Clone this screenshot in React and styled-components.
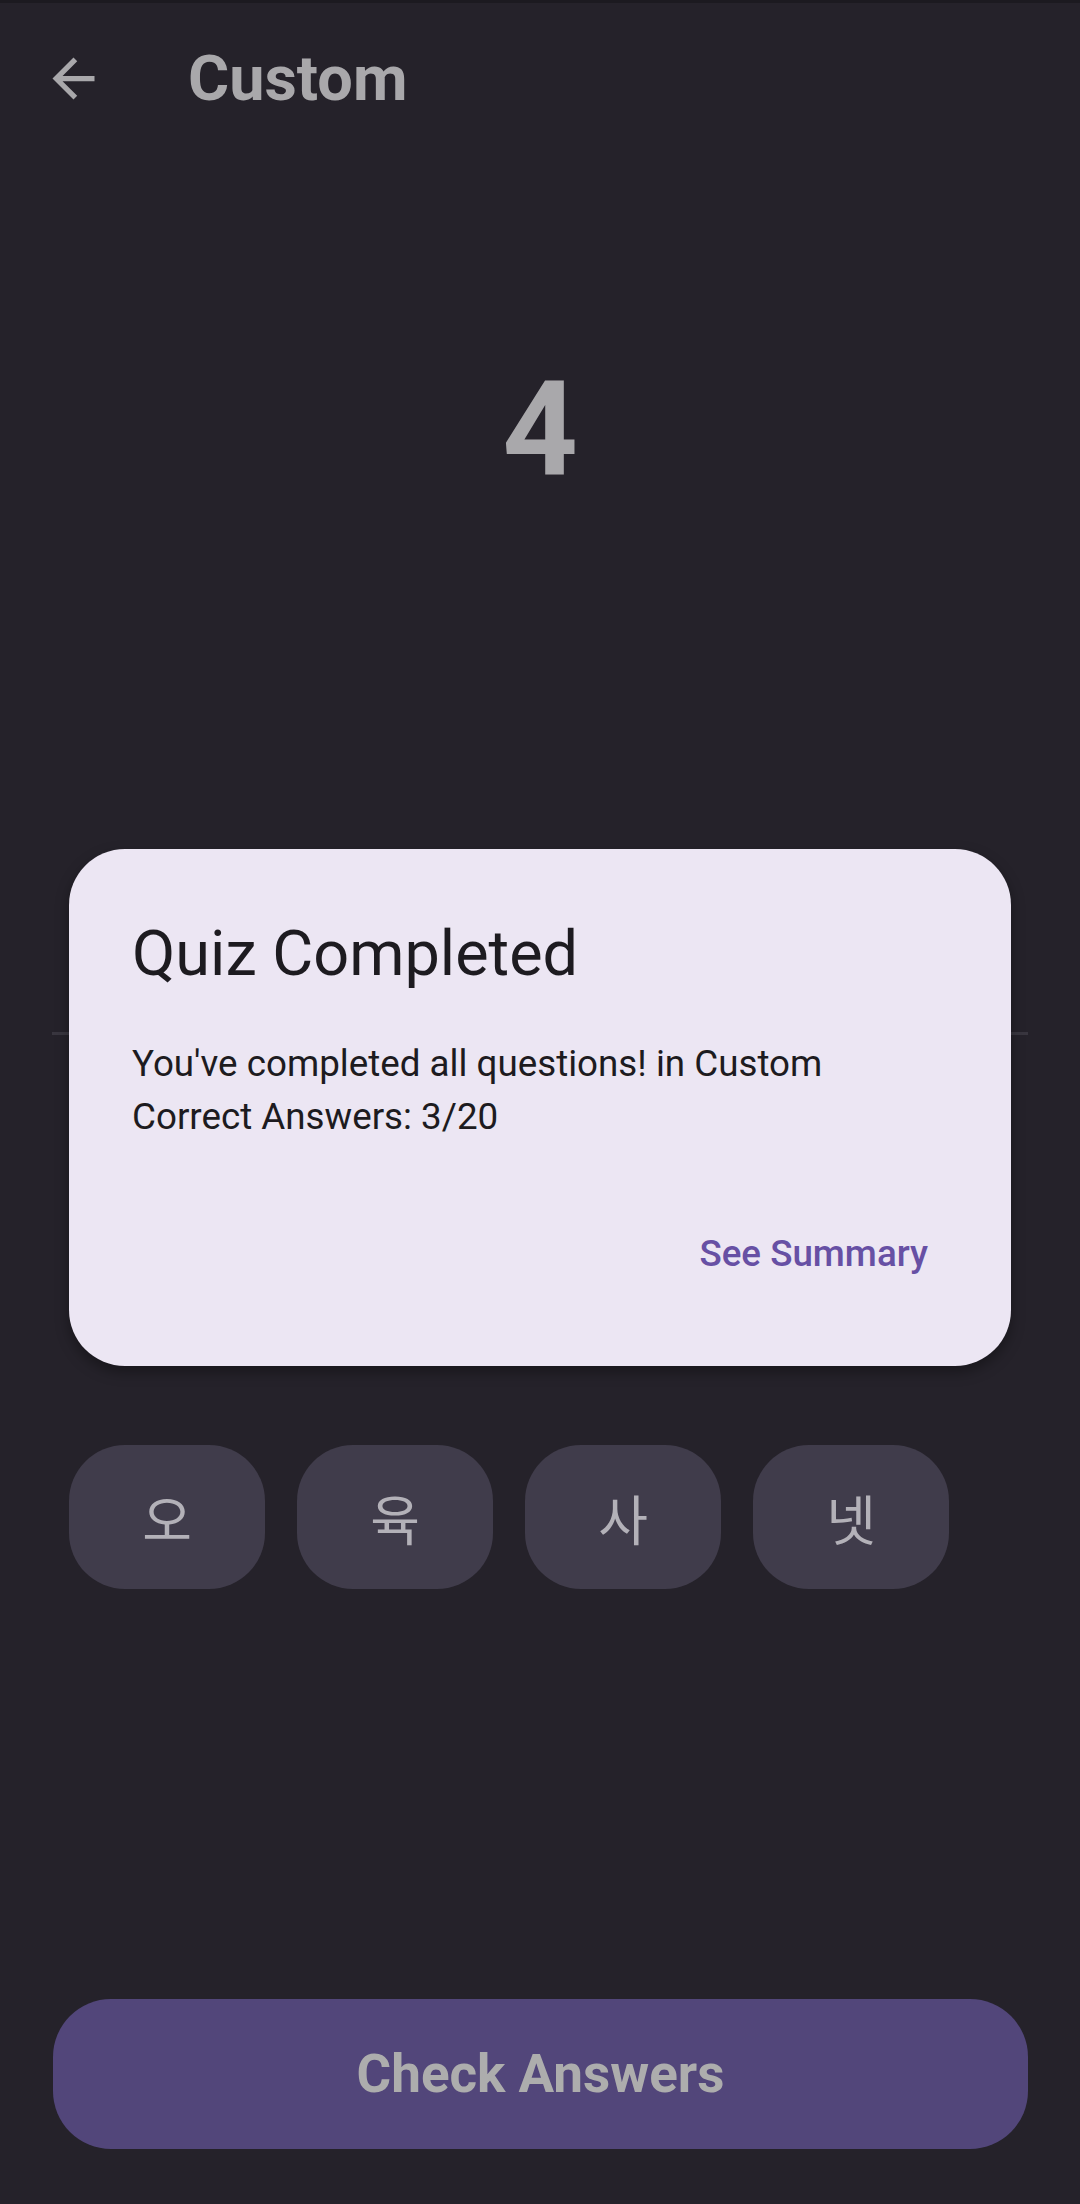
import styled, { createGlobalStyle } from 'styled-components'

const GlobalStyle = createGlobalStyle`
  html, body {
    margin: 0;
    padding: 0;
    background: #25222a;
  }
  * {
    box-sizing: border-box;
  }
`

const Screen = styled.div`
  position: relative;
  display: flex;
  flex-direction: column;
  width: 1080px;
  height: 2204px;
  background: #25222a;
  font-family: Roboto, "Noto Sans", sans-serif;
  overflow: hidden;
`

const StatusStrip = styled.div`
  height: 3px;
  background: #1c1a20;
`

const TopBar = styled.header`
  display: flex;
  align-items: center;
  height: 150px;
  padding-left: 42px;
`

const BackButton = styled.div`
  display: flex;
  width: 63px;
  height: 63px;
  color: #a9a8ab;
`

const Title = styled.h1`
  margin: 0 0 0 83px;
  font-size: 63px;
  line-height: 1;
  font-weight: 700;
  color: #a9a8ab;
`

const Prompt = styled.div`
  margin-top: 210px;
  text-align: center;
  font-size: 132px;
  line-height: 1;
  font-weight: 700;
  color: #a9a8ab;
`

const Divider = styled.div`
  margin: 537px 52px 0;
  height: 3px;
  background: #39363f;
`

const ChipRow = styled.div`
  display: flex;
  gap: 32px;
  margin-top: 410px;
  padding-left: 69px;
`

const Chip = styled.div`
  display: flex;
  align-items: center;
  justify-content: center;
  width: 196px;
  height: 144px;
  border-radius: 56px;
  background: #403c4b;
  color: #b3b1b8;
  font-family: "Noto Sans CJK KR", sans-serif;
  font-size: 54px;
  font-weight: 400;
`

const CheckButton = styled.div`
  display: flex;
  align-items: center;
  justify-content: center;
  margin: auto 52px 55px 53px;
  height: 150px;
  border-radius: 58px;
  background: #52467a;
  color: #adadad;
  font-size: 53px;
  font-weight: 700;
`

const Overlay = styled.div`
  position: absolute;
  inset: 0;
  display: flex;
  align-items: center;
  justify-content: center;
  padding-top: 11px;
`

const Dialog = styled.div`
  width: 942px;
  padding: 63px 63px 60px;
  border-radius: 56px;
  background: #ece6f3;
  box-shadow: 0 6px 14px rgba(0, 0, 0, 0.35);
`

const DialogTitle = styled.h2`
  margin: 0;
  font-size: 63px;
  line-height: 84px;
  font-weight: 400;
  color: #1d1b20;
`

const DialogBody = styled.p`
  margin: 42px 0 0;
  font-size: 36.75px;
  line-height: 52.5px;
  color: #1d1b20;
`

const Actions = styled.div`
  display: flex;
  justify-content: flex-end;
  margin-top: 58px;
`

const TextButton = styled.div`
  display: flex;
  align-items: center;
  height: 105px;
  padding: 0 20px;
  font-size: 36.75px;
  font-weight: 500;
  color: #6750a4;
`

const answers = ['오', '육', '사', '넷']

export default function App() {
  return (
    <>
      <GlobalStyle />
      <Screen>
        <StatusStrip />
        <TopBar>
          <BackButton>
            <svg viewBox="0 0 24 24" width="63" height="63" fill="currentColor">
              <path d="M20 11H7.83l5.59-5.59L12 4l-8 8 8 8 1.41-1.41L7.83 13H20v-2z" />
            </svg>
          </BackButton>
          <Title>Custom</Title>
        </TopBar>
        <Prompt>4</Prompt>
        <Divider />
        <ChipRow>
          {answers.map((a) => (
            <Chip key={a}>{a}</Chip>
          ))}
        </ChipRow>
        <CheckButton>Check Answers</CheckButton>
        <Overlay>
          <Dialog>
            <DialogTitle>Quiz Completed</DialogTitle>
            <DialogBody>
              You've completed all questions! in Custom
              <br />
              Correct Answers: 3/20
            </DialogBody>
            <Actions>
              <TextButton>See Summary</TextButton>
            </Actions>
          </Dialog>
        </Overlay>
      </Screen>
    </>
  )
}
